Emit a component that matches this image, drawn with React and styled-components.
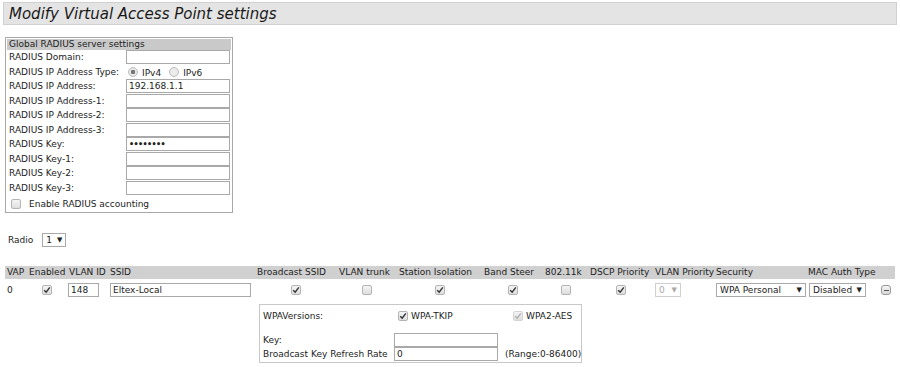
import React from "react";
import styled, { createGlobalStyle } from "styled-components";

const Global = createGlobalStyle`
  html, body { margin: 0; padding: 0; background: #fff; }
  body { font-family: "DejaVu Sans", Verdana, sans-serif; font-size: 9px; color: #222; }
`;

const Page = styled.div`
  padding: 2px 3px 0 3px;
  width: 894px;
`;

const TitleBar = styled.div`
  box-sizing: border-box;
  height: 23px;
  background: #e4e4e4;
  border: 1px solid #d0d0d0;
  display: flex;
  align-items: center;
  padding-left: 5px;
  font-style: italic;
  font-size: 15px;
  color: #1a1a1a;
`;

const RadiusBox = styled.div`
  margin: 12px 0 0 2px;
  width: 226px;
  border: 1px solid #a8a8a8;
  padding: 1px 0 3px 0;
`;

const BoxHeader = styled.div`
  background: #c9c9c9;
  height: 11px;
  line-height: 11px;
  padding-left: 2px;
  margin: 0 1px;
`;

const FormGrid = styled.div`
  display: grid;
  grid-template-columns: 117px 104px;
  grid-auto-rows: 14.5px;
  align-items: center;
  padding-left: 3px;
`;

const Label = styled.span`
  white-space: nowrap;
`;

const Input = styled.div`
  box-sizing: border-box;
  width: ${(p) => p.$w || 104}px;
  height: 14px;
  border: 1px solid #a9a9a9;
  background: #fff;
  padding-left: 2px;
  line-height: 12px;
  font-size: 9px;
  white-space: nowrap;
  overflow: hidden;
`;

const Dots = styled.span`
  font-size: 8px;
  letter-spacing: -0.6px;
  line-height: 12px;
  font-weight: bold;
`;

const RadioRow = styled.div`
  display: flex;
  align-items: center;
  gap: 4px;
  padding-left: 2px;
`;

const RadioDot = styled.span`
  display: inline-block;
  box-sizing: border-box;
  width: 10px;
  height: 10px;
  border-radius: 50%;
  border: 1px solid #bdbdbd;
  background: radial-gradient(circle, ${(p) => (p.$on ? "#777 0 2px, #e8e8e8 2.5px" : "#eee 0, #e6e6e6 100%")});
`;

const RadioText = styled.span`
  margin-top: 3px;
  margin-right: 4px;
`;

const CheckRow = styled.div`
  display: flex;
  align-items: center;
  gap: 8px;
  padding: 4px 0 0 5px;
`;

const Box = styled.span`
  display: inline-flex;
  align-items: center;
  justify-content: center;
  box-sizing: border-box;
  width: 10px;
  height: 10px;
  border: 1px solid ${(p) => (p.$dis ? "#d4d4d4" : "#b4b4b4")};
  border-radius: 2px;
  background: linear-gradient(#f4f4f4, #dedede);
`;

const Check = ({ on, dis }) => (
  <Box $dis={dis}>
    {on && (
      <svg width="8" height="8" viewBox="0 0 8 8">
        <path d="M1.2 4.2 L3.2 6.2 L6.8 1.4" fill="none" stroke={dis ? "#b0b0b0" : "#333"} strokeWidth="1.4" />
      </svg>
    )}
  </Box>
);

const RadioLine = styled.div`
  display: flex;
  align-items: center;
  gap: 9px;
  margin: 20px 0 0 5px;
`;

const Select = styled.div`
  box-sizing: border-box;
  display: inline-flex;
  align-items: center;
  justify-content: space-between;
  width: ${(p) => p.$w}px;
  height: 14px;
  border: 1px solid ${(p) => (p.$dis ? "#cfcfcf" : "#a9a9a9")};
  color: ${(p) => (p.$dis ? "#aaa" : "#222")};
  padding: 0 3px 0 3px;
  background: #fff;
  white-space: nowrap;
`;

const Arrow = styled.span`
  font-size: 7px;
`;

const Table = styled.div`
  margin: 19px 0 0 2px;
  display: grid;
  grid-template-columns: 22px 40px 41px 147px 82px 60px 85px 61px 45px 65px 61px 92px 70px 19px;
`;

const Head = styled.div`
  background: #d0d0d0;
  height: 13px;
  line-height: 13px;
  padding-left: 2px;
  white-space: nowrap;
  overflow: hidden;
`;

const Cell = styled.div`
  height: 22px;
  display: flex;
  align-items: center;
  justify-content: ${(p) => (p.$center ? "center" : "flex-start")};
  padding-left: ${(p) => (p.$pl != null ? p.$pl : 0)}px;
`;

const MinusBtn = styled.span`
  box-sizing: border-box;
  width: 10px;
  height: 10px;
  border: 1px solid #999;
  border-radius: 3px;
  background: linear-gradient(#f4f4f4, #d8d8d8);
  display: flex;
  align-items: center;
  justify-content: center;
  &::after {
    content: "";
    width: 5px;
    height: 1px;
    background: #555;
  }
`;

const SubPanel = styled.div`
  grid-column: 5 / 12;
  justify-self: start;
  margin: 3px 0 0 4px;
  width: 323px;
  box-sizing: border-box;
  border: 1px solid #c8c8c8;
  padding: 4px 0 1px 3px;
  display: grid;
  grid-template-columns: 131px 111px 76px;
  grid-template-rows: 14px 10px 14px 14px;
  align-items: center;
`;

const CheckLabel = styled.span`
  display: inline-flex;
  align-items: center;
  gap: 3px;
  padding-left: ${(p) => p.$pl}px;
`;

const Spacer = styled.div`
  grid-column: 1 / -1;
`;

const radiusRows = [
  ["RADIUS Domain:", ""],
  ["RADIUS IP Address Type:", "radio"],
  ["RADIUS IP Address:", "192.168.1.1"],
  ["RADIUS IP Address-1:", ""],
  ["RADIUS IP Address-2:", ""],
  ["RADIUS IP Address-3:", ""],
  ["RADIUS Key:", "dots"],
  ["RADIUS Key-1:", ""],
  ["RADIUS Key-2:", ""],
  ["RADIUS Key-3:", ""],
];

const heads = [
  "VAP", "Enabled", "VLAN ID", "SSID", "Broadcast SSID", "VLAN trunk", "Station Isolation",
  "Band Steer", "802.11k", "DSCP Priority", "VLAN Priority", "Security", "MAC Auth Type", "",
];

export default function App() {
  return (
    <>
      <Global />
      <Page>
        <TitleBar>Modify Virtual Access Point settings</TitleBar>
        <RadiusBox>
          <BoxHeader>Global RADIUS server settings</BoxHeader>
          <FormGrid>
            {radiusRows.map(([l, v]) => (
              <React.Fragment key={l}>
                <Label>{l}</Label>
                {v === "radio" ? (
                  <RadioRow>
                    <RadioDot $on />
                    <RadioText>IPv4</RadioText>
                    <RadioDot />
                    <RadioText>IPv6</RadioText>
                  </RadioRow>
                ) : (
                  <Input>{v === "dots" ? <Dots>••••••••</Dots> : v}</Input>
                )}
              </React.Fragment>
            ))}
          </FormGrid>
          <CheckRow>
            <Check />
            <span>Enable RADIUS accounting</span>
          </CheckRow>
        </RadiusBox>

        <RadioLine>
          <span>Radio</span>
          <Select $w={24}>1 <Arrow>▼</Arrow></Select>
        </RadioLine>

        <Table>
          {heads.map((h, i) => (
            <Head key={i}>{h}</Head>
          ))}
          <Cell $pl={2}>0</Cell>
          <Cell $center><Check on /></Cell>
          <Cell $pl={1}><Input $w={31}>148</Input></Cell>
          <Cell $pl={2}><Input $w={141}>Eltex-Local</Input></Cell>
          <Cell $center><Check on /></Cell>
          <Cell $center><Check /></Cell>
          <Cell $center><Check on /></Cell>
          <Cell $center><Check on /></Cell>
          <Cell $center><Check /></Cell>
          <Cell $center><Check on /></Cell>
          <Cell $pl={2}><Select $w={26} $dis>0 <Arrow>▼</Arrow></Select></Cell>
          <Cell $pl={2}><Select $w={90}>WPA Personal <Arrow>▼</Arrow></Select></Cell>
          <Cell $pl={3}><Select $w={57}>Disabled <Arrow>▼</Arrow></Select></Cell>
          <Cell $pl={5}><MinusBtn /></Cell>

          <SubPanel>
            <Label>WPAVersions:</Label>
            <CheckLabel $pl={4}><Check on />WPA-TKIP</CheckLabel>
            <CheckLabel $pl={8}><Check on dis />WPA2-AES</CheckLabel>
            <Spacer />
            <Label>Key:</Label>
            <Input $w={104} />
            <span />
            <Label>Broadcast Key Refresh Rate</Label>
            <Input $w={104}>0</Input>
            <Label>(Range:0-86400)</Label>
          </SubPanel>
        </Table>
      </Page>
    </>
  );
}
